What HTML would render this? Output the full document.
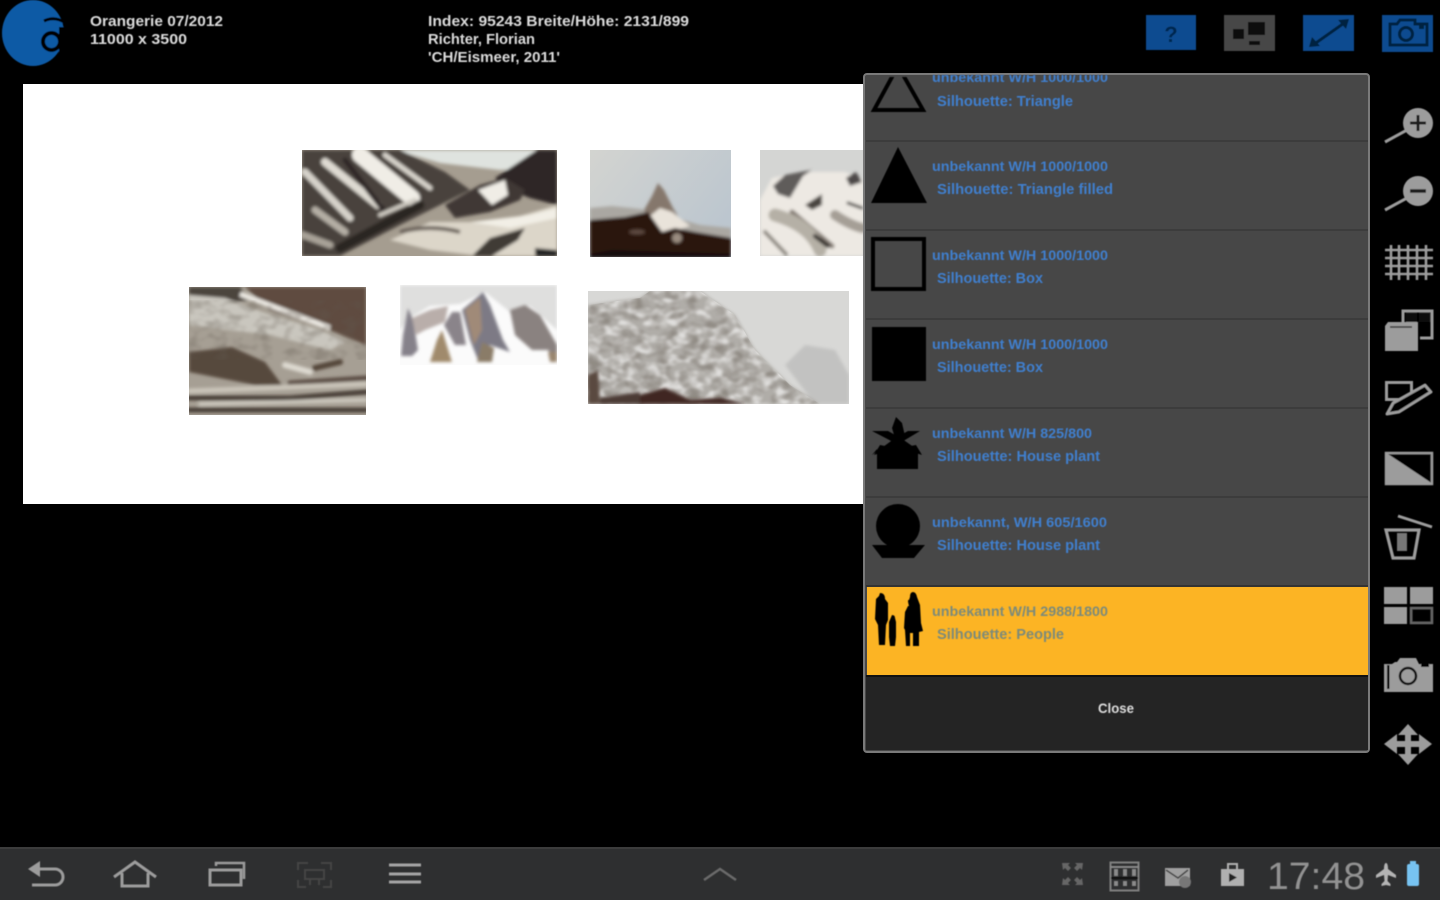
<!DOCTYPE html>
<html>
<head>
<meta charset="utf-8">
<style>
html,body{margin:0;padding:0;background:#000;width:1440px;height:900px;overflow:hidden}
svg{display:block;position:absolute;left:0;top:0}
text{font-family:"Liberation Sans",sans-serif}
</style>
</head>
<body>
<svg width="1440" height="900" viewBox="0 0 1440 900" xmlns="http://www.w3.org/2000/svg">
<defs>
<filter id="b1" x="-10%" y="-10%" width="120%" height="120%"><feGaussianBlur stdDeviation="1.6"/></filter>
<filter id="b2" x="-5%" y="-5%" width="110%" height="110%"><feGaussianBlur stdDeviation="0.6"/></filter>
<filter id="txd" x="0" y="0" width="100%" height="100%">
<feTurbulence type="fractalNoise" baseFrequency="0.07 0.1" numOctaves="2" seed="4"/>
<feColorMatrix values="0 0 0 0 .12  0 0 0 0 .1  0 0 0 0 .08  3.4 0 0 0 -1.5"/>
<feGaussianBlur stdDeviation="1"/>
</filter>
<filter id="txl" x="0" y="0" width="100%" height="100%">
<feTurbulence type="fractalNoise" baseFrequency="0.08 0.11" numOctaves="2" seed="11"/>
<feColorMatrix values="0 0 0 0 1  0 0 0 0 1  0 0 0 0 1  3.6 0 0 0 -1.55"/>
<feGaussianBlur stdDeviation="1"/>
</filter>
<clipPath id="p1"><rect x="302" y="150" width="255" height="106"/></clipPath>
<clipPath id="p2"><rect x="590" y="150" width="141" height="107"/></clipPath>
<clipPath id="p3"><rect x="760" y="150" width="104" height="106"/></clipPath>
<clipPath id="p4"><rect x="189" y="287" width="177" height="128"/></clipPath>
<clipPath id="p5"><rect x="400" y="285" width="157" height="80"/></clipPath>
<clipPath id="p6"><rect x="588" y="291" width="261" height="113"/></clipPath>
<clipPath id="m6"><polygon points="588,305 640,298 650,291 700,291 735,315 755,350 790,385 820,404 588,404"/></clipPath>
<clipPath id="c0"><rect x="864" y="77" width="100" height="60"/></clipPath>
<clipPath id="c1"><rect x="925" y="75" width="200" height="20"/></clipPath>
<linearGradient id="sky2" x1="0" y1="0" x2="1" y2="0.6"><stop offset="0" stop-color="#d3d4d0"/><stop offset="1" stop-color="#bcc6cf"/></linearGradient>
</defs>

<!-- white canvas -->
<rect x="23" y="84" width="842" height="420" fill="#fff"/>

<!-- photo 1 -->
<g clip-path="url(#p1)">
<rect x="302" y="150" width="255" height="106" fill="#a59d90"/>
<g filter="url(#b1)">
<polygon points="395,150 540,150 530,168 500,170 440,163" fill="#dfe3df"/>
<polygon points="302,150 400,150 445,172 470,190 440,205 400,225 340,256 302,256" fill="#4a423c"/>
<polygon points="495,178 537,150 557,150 557,205 530,198 510,190" fill="#2d2725"/>
<g fill="none" stroke-linecap="round">
<path d="M360 155 L412 198" stroke="#f0ede6" stroke-width="16"/>
<path d="M325 162 L378 205" stroke="#dedad2" stroke-width="8"/>
<path d="M305 172 L350 218" stroke="#d6d2ca" stroke-width="7"/>
<path d="M385 155 L430 188" stroke="#d8d4cc" stroke-width="5"/>
<path d="M315 210 L345 232" stroke="#b4aea4" stroke-width="7"/>
<path d="M303 235 L330 245" stroke="#a8a298" stroke-width="7"/>
<path d="M345 160 L385 212" stroke="#2e2825" stroke-width="5"/>
<path d="M340 248 L420 205" stroke="#2b2724" stroke-width="9"/>
<path d="M380 215 L415 200" stroke="#cfcbc2" stroke-width="4"/>
</g>
<polygon points="445,205 480,185 505,178 525,190 520,200 490,212 455,218" fill="#3f3835"/>
<polygon points="478,190 505,180 508,195 492,205" fill="#f0ede6"/>
<polygon points="390,240 430,222 500,222 557,205 557,256 480,256 430,250" fill="#dcd6c9"/>
<polygon points="470,222 530,215 557,208 557,218 510,228" fill="#f2efe6"/>
<polygon points="472,256 490,238 525,228 518,240 492,256" fill="#3f3a34"/>
<path d="M400 232 q30 -8 60 0" stroke="#6a625a" stroke-width="4" fill="none"/>
<polygon points="535,248 557,250 557,256 535,256" fill="#222"/>
</g>
</g>

<!-- photo 2 -->
<g clip-path="url(#p2)">
<rect x="590" y="150" width="141" height="107" fill="url(#sky2)"/>
<g filter="url(#b1)">
<polygon points="590,208 612,206 650,210 700,225 731,228 731,245 590,240" fill="#aaa7a2"/>
<polygon points="644,210 652,196 658,183 664,190 673,208 678,216 650,218" fill="#85776c"/>
<polygon points="650,216 660,208 672,212 690,226 664,234" fill="#e9e3da"/>
<polygon points="590,220 625,217 648,212 662,232 675,228 695,232 731,238 731,257 590,257" fill="#2a1310"/>
<ellipse cx="677" cy="238" rx="5" ry="5" fill="#9a8c80"/>
<ellipse cx="637" cy="232" rx="8" ry="2.500" fill="#5d4a40"/>
<polygon points="590,254 612,250 731,254 731,258 590,258" fill="#160a08"/>
</g>
</g>

<!-- photo 3 -->
<g clip-path="url(#p3)">
<rect x="760" y="150" width="104" height="106" fill="#d4d5d3"/>
<g filter="url(#b1)">
<polygon points="760,200 772,178 800,172 845,172 864,180 864,256 760,256" fill="#ede9e3"/>
<polygon points="773,186 785,175 800,172 812,170 803,176 790,198 778,194" fill="#5f5c5a"/>
<polygon points="846,178 856,172 862,182 850,186" fill="#4d4a48"/>
<polygon points="805,205 822,194 822,205 812,210" fill="#4a4540"/>
<g fill="none" stroke-linecap="round">
<path d="M792 212 L832 246" stroke="#857d74" stroke-width="5"/>
<path d="M765 232 L786 254" stroke="#8f8a82" stroke-width="4"/>
<path d="M775 215 Q810 225 820 250" stroke="#b5b0a6" stroke-width="13"/>
<path d="M835 215 Q850 225 862 228" stroke="#a59f96" stroke-width="10"/>
<path d="M815 236 L828 246" stroke="#2e2a27" stroke-width="4"/>
<path d="M848 203 L862 208" stroke="#3b3734" stroke-width="3"/>
</g>
</g>
</g>

<!-- photo 4 -->
<g clip-path="url(#p4)">
<rect x="189" y="287" width="177" height="128" fill="#a69f94"/>
<g filter="url(#b1)">
<polygon points="245,287 366,287 366,345 325,328 270,310" fill="#5e4c40"/>
<polygon points="189,287 240,287 250,300 225,303 189,295" fill="#4c443c"/>
<polygon points="189,295 225,298 270,315 320,330 345,342 330,350 270,335 189,325" fill="#c9c6be"/>
<path d="M240 294 L330 328" stroke="#ebe8e2" stroke-width="5" fill="none"/>
<polygon points="189,352 232,347 265,362 282,385 255,385 189,372" fill="#57483c"/>
<g fill="none" stroke-linecap="round">
<path d="M290 383 L366 378" stroke="#5c4e44" stroke-width="5"/>
<path d="M189 391 L270 388 L366 384" stroke="#cac5ba" stroke-width="5"/>
<path d="M189 398 L290 398 L366 392" stroke="#4a3f37" stroke-width="5"/>
<path d="M200 404 L366 400" stroke="#cfcbc1" stroke-width="3.500"/>
<path d="M189 410 L366 410" stroke="#4a4037" stroke-width="5"/>
<path d="M285 365 L310 372" stroke="#ddd9d0" stroke-width="6"/>
<path d="M315 368 L340 362" stroke="#54463b" stroke-width="6"/>
</g>
</g>
<rect x="189" y="300" width="177" height="60" filter="url(#txd)" opacity=".3"/>
</g>

<!-- photo 5 -->
<g clip-path="url(#p5)">
<rect x="400" y="285" width="157" height="80" fill="#fbfbfb"/>
<polygon points="400,285 557,285 557,330 530,306 510,312 485,292 460,304 430,306 410,318 400,330" fill="#dfdfde" filter="url(#b1)"/>
<g filter="url(#b1)">
<polygon points="401,356 403,335 408,308 413,320 418,350 412,356" fill="#85818a"/>
<polygon points="412,318 430,310 448,306 445,322 425,330 416,335" fill="#b9aeaa"/>
<polygon points="444,325 452,312 460,312 466,345 455,345" fill="#8a848a"/>
<polygon points="430,362 437,340 442,330 452,362" fill="#a08a6c"/>
<polygon points="462,310 474,300 483,292 490,305 503,340 510,352 490,345 478,360 470,340" fill="#7d7a85"/>
<polygon points="465,310 480,298 482,330 474,345" fill="#a08a78"/>
<polygon points="510,310 525,305 540,315 557,345 557,362 548,350 532,350 515,335" fill="#8a8280"/>
<polygon points="477,362 482,342 494,348 492,362" fill="#8a7c68"/>
<polygon points="548,352 557,352 557,362 550,362" fill="#9a8670"/>
</g>
</g>

<!-- photo 6 -->
<g clip-path="url(#p6)">
<rect x="588" y="291" width="261" height="113" fill="#d8d8d6"/>
<g filter="url(#b1)">
<polygon points="785,365 805,345 835,350 849,375 849,404 815,404" fill="#c2c2c1"/>
<polygon points="588,305 640,298 650,291 700,291 735,315 755,350 790,385 820,404 588,404" fill="#b0ada8"/>
</g>
<g clip-path="url(#m6)">
<rect x="588" y="291" width="240" height="113" filter="url(#txl)" opacity=".6"/>
<rect x="588" y="291" width="240" height="113" filter="url(#txd)" opacity=".4"/>
</g>
<g filter="url(#b1)">
<polygon points="640,395 665,388 690,400 720,398 745,404 630,404" fill="#3f2622"/>
<polygon points="588,375 598,370 600,404 588,404" fill="#5a4840"/>
<polygon points="600,398 640,392 640,404 600,404" fill="#4c3a34"/>
</g>
</g>

<!-- dialog -->
<rect x="864" y="74" width="505" height="678" rx="3" fill="#474747" stroke="#7a7a7a" stroke-width="2"/>
<g fill="#3c3c3c">
<rect x="866" y="140" width="502" height="2"/>
<rect x="866" y="229" width="502" height="2"/>
<rect x="866" y="318" width="502" height="2"/>
<rect x="866" y="407" width="502" height="2"/>
<rect x="866" y="496" width="502" height="2"/>
</g>
<rect x="866" y="585" width="502" height="2" fill="#333"/>
<rect x="867" y="587" width="501" height="88" fill="#fcb424"/>
<rect x="866" y="675" width="502" height="75" fill="#242424"/>
<rect x="866" y="675" width="502" height="2" fill="#111"/>

<!-- row icons -->
<g filter="url(#b2)">
<g clip-path="url(#c0)"><polygon points="898,66 923,110 874,110" fill="none" stroke="#000" stroke-width="4"/></g>
<polygon points="898,147 927,203 871,203" fill="#000"/>
<rect x="873" y="239" width="51" height="50" fill="none" stroke="#000" stroke-width="4"/>
<rect x="872" y="327" width="54" height="54" fill="#000"/>
<g fill="#000">
<polygon points="877,469 877,449 872,455 898,436 925,455 918,450 918,469"/>
<polygon points="897,445 892,428 896,417 902,423 905,436"/>
<polygon points="895,443 872,431 888,431 897,436"/>
<polygon points="900,443 920,431 908,431 899,436"/>
<polygon points="895,448 874,455 880,445"/>
<polygon points="900,448 922,455 916,445"/>
</g>
<circle cx="898" cy="526" r="22" fill="#000"/>
<polygon points="872,545 925,545 914,558 882,558" fill="#000"/>
<path d="M880 593 q5 0 5 6 l3 4 v17 l-2 5 -1 20 h-6 l-1-20 -3-6 1-20 3-3z" fill="#000"/>
<path d="M892 615 q3 0 3 3 l1 4 v15 l-1 9 h-5 l-1-9 v-15 z" fill="#000"/>
<path d="M909 600 q-2-1 0 6 l-1 0 -3 6 -1 16 1 2 1 16 h4 v-13 h3 v13 h6 v-14 l4-1 -2-8 -1-18 -3-8 q-1-5 -4-5 t-3 5 z" fill="#000"/>
</g>

<!-- row text -->
<g filter="url(#b2)" fill="#3f7fce" font-weight="bold">
<g clip-path="url(#c1)"><text x="932" y="82" font-size="13.5" textLength="176" lengthAdjust="spacingAndGlyphs">unbekannt W/H 1000/1000</text></g>
<text x="937" y="106" font-size="15" textLength="136" lengthAdjust="spacingAndGlyphs">Silhouette: Triangle</text>
<text x="932" y="171" font-size="13.5" textLength="176" lengthAdjust="spacingAndGlyphs">unbekannt W/H 1000/1000</text>
<text x="937" y="194" font-size="15" textLength="176" lengthAdjust="spacingAndGlyphs">Silhouette: Triangle filled</text>
<text x="932" y="260" font-size="13.5" textLength="176" lengthAdjust="spacingAndGlyphs">unbekannt W/H 1000/1000</text>
<text x="937" y="283" font-size="15" textLength="106" lengthAdjust="spacingAndGlyphs">Silhouette: Box</text>
<text x="932" y="349" font-size="13.5" textLength="176" lengthAdjust="spacingAndGlyphs">unbekannt W/H 1000/1000</text>
<text x="937" y="372" font-size="15" textLength="106" lengthAdjust="spacingAndGlyphs">Silhouette: Box</text>
<text x="932" y="438" font-size="13.5" textLength="160" lengthAdjust="spacingAndGlyphs">unbekannt W/H 825/800</text>
<text x="937" y="461" font-size="15" textLength="163" lengthAdjust="spacingAndGlyphs">Silhouette: House plant</text>
<text x="932" y="527" font-size="13.5" textLength="175" lengthAdjust="spacingAndGlyphs">unbekannt, W/H 605/1600</text>
<text x="937" y="550" font-size="15" textLength="163" lengthAdjust="spacingAndGlyphs">Silhouette: House plant</text>
<text x="932" y="616" font-size="13.5" textLength="176" lengthAdjust="spacingAndGlyphs" fill="#7b8a7a">unbekannt W/H 2988/1800</text>
<text x="937" y="639" font-size="15" textLength="127" lengthAdjust="spacingAndGlyphs" fill="#7b8a7a">Silhouette: People</text>
</g>
<text x="1116" y="713" font-size="14" font-weight="bold" fill="#ddd" text-anchor="middle" textLength="36" lengthAdjust="spacingAndGlyphs" filter="url(#b2)">Close</text>

<!-- header text -->
<g filter="url(#b2)" fill="#dcdcdc" font-weight="bold" font-size="15">
<text x="90" y="26" textLength="133" lengthAdjust="spacingAndGlyphs">Orangerie 07/2012</text>
<text x="90" y="44" textLength="97" lengthAdjust="spacingAndGlyphs">11000 x 3500</text>
<text x="428" y="26" textLength="261" lengthAdjust="spacingAndGlyphs">Index: 95243 Breite/Höhe: 2131/899</text>
<text x="428" y="44" textLength="107" lengthAdjust="spacingAndGlyphs">Richter, Florian</text>
<text x="428" y="62" textLength="132" lengthAdjust="spacingAndGlyphs">'CH/Eismeer, 2011'</text>
</g>

<!-- logo -->
<g filter="url(#b2)">
<ellipse cx="33" cy="33" rx="31" ry="33" fill="#105aa5"/>
<path d="M44 21 Q54 16 64 22" fill="none" stroke="#000" stroke-width="3"/>
<circle cx="51.500" cy="41.500" r="8.500" fill="#105aa5" stroke="#000" stroke-width="4"/>
<rect x="59" y="27" width="8" height="28" fill="#000"/>
</g>

<!-- top buttons -->
<g filter="url(#b2)">
<rect x="1146" y="15" width="50" height="35" fill="#0a4c90"/>
<text x="1171" y="42" font-size="22" font-weight="bold" fill="#06284e" text-anchor="middle">?</text>
<rect x="1224" y="15" width="51" height="36" fill="#474747"/>
<rect x="1233" y="29" width="11" height="10" fill="#111"/>
<rect x="1248" y="22" width="17" height="13" fill="#111"/>
<rect x="1249" y="41" width="11" height="4" fill="#111"/>
<rect x="1303" y="15" width="51" height="36" fill="#0a4c90"/>
<path d="M1313 45 L1347 21" stroke="#06213f" stroke-width="3"/>
<polygon points="1309,47 1320,46 1312,37" fill="#06213f"/>
<polygon points="1349,19 1338,20 1346,29" fill="#06213f"/>
<rect x="1382" y="15" width="51" height="37" fill="#0a4c90"/>
<path d="M1390 24 h7 l3-4 h15 v4 h12 v21 h-37 z" fill="none" stroke="#06213f" stroke-width="3"/>
<circle cx="1406" cy="34" r="6.500" fill="none" stroke="#06213f" stroke-width="3"/>
<rect x="1419" y="25" width="5" height="4" fill="#06213f"/>
</g>

<!-- side toolbar -->
<g filter="url(#b2)" fill="#9c9c9c" stroke="none">
<circle cx="1418" cy="123" r="15"/>
<path d="M1385 142 L1407 130" stroke="#9c9c9c" stroke-width="3"/>
<path d="M1410 123 h16 M1418 115 v16" stroke="#1a1a1a" stroke-width="3"/>
<circle cx="1418" cy="191" r="15"/>
<path d="M1385 210 L1407 198" stroke="#9c9c9c" stroke-width="3"/>
<path d="M1410 191 h16" stroke="#1a1a1a" stroke-width="3.500"/>
<path d="M1391 245 v35 M1399 245 v35 M1408 245 v35 M1417 245 v35 M1426 245 v35 M1385 250 h48 M1385 258 h48 M1385 266 h48 M1385 274 h48" stroke="#9c9c9c" stroke-width="2.600" fill="none"/>
<path d="M1403 326 v-15 h29 v27 h-12" fill="none" stroke="#9c9c9c" stroke-width="3"/>
<rect x="1406" y="313" width="11" height="9" fill="#111"/>
<rect x="1419" y="313" width="11" height="9" fill="#111"/>
<path d="M1385 326 l3-4 h30 v29 h-33 z"/>
<path d="M1390 327 h22" stroke="#333" stroke-width="1.500"/>
<rect x="1386.500" y="382.500" width="25" height="17" fill="none" stroke="#9c9c9c" stroke-width="3"/>
<path d="M1387 414 L1393 403 L1425 385 L1431 392 L1399 412 Z" fill="#000" stroke="#9c9c9c" stroke-width="3" stroke-linejoin="round"/>
<rect x="1386" y="453" width="46" height="31" fill="#000" stroke="#9c9c9c" stroke-width="2.500"/>
<polygon points="1385,452 1433,484 1385,484"/>
<path d="M1398 516 L1432 527" stroke="#9c9c9c" stroke-width="3"/>
<path d="M1386 530 H1419 L1414 558 H1393 Z" fill="none" stroke="#9c9c9c" stroke-width="3.200"/>
<rect x="1397" y="533" width="10" height="18" fill="#777"/>
<rect x="1384" y="587" width="23" height="17"/>
<rect x="1384" y="607" width="23" height="17"/>
<rect x="1410" y="587" width="23" height="17"/>
<rect x="1411" y="608" width="21" height="15" fill="#000" stroke="#666" stroke-width="2.500"/>
<path d="M1384 664 h8 l3-2 h2 l3-4 h16 l3 6 h14 v28 h-49 z"/>
<rect x="1387" y="665" width="2.500" height="24" fill="#000"/>
<circle cx="1408" cy="676" r="8" fill="none" stroke="#111" stroke-width="2.500"/>
<rect x="1421" y="663" width="8" height="4" fill="#000"/>
<polygon points="1408,724 1418,735 1411,735 1411,741 1419,741 1419,734 1432,744 1419,754 1419,747 1411,747 1411,754 1418,754 1408,765 1398,754 1405,754 1405,747 1397,747 1397,754 1384,744 1397,734 1397,741 1405,741 1405,735 1398,735"/>
</g>

<!-- status bar -->
<rect x="0" y="848" width="1440" height="52" fill="#2e2f30"/>
<rect x="0" y="847" width="1440" height="2" fill="#3c3c3c"/>
<g filter="url(#b2)" fill="none" stroke="#9c9c9c" stroke-width="3">
<polygon points="28,869 40,861 40,877" fill="#9c9c9c" stroke="none"/>
<path d="M39 869 H55 A8 8 0 0 1 55 885 H32"/>
<path d="M114 877 L135 862 L156 877"/>
<path d="M122 873 V886 H148 V873"/>
<rect x="210" y="870" width="31" height="15"/>
<path d="M216 866 V863 H244 V879" stroke-width="2.500"/>
<g stroke="#454545" stroke-width="2">
<path d="M298 870 V863 H308 M321 863 H331 V870 M298 880 V887 H306 M323 887 H331 V880"/>
<rect x="305" y="870" width="19" height="9"/>
<path d="M310 879 v6 M319 879 v6"/>
</g>
<path d="M389 865 H421 M389 874 H421 M389 882 H421" stroke="#a4a4a4"/>
<path d="M704 880 L720 869 L736 880" stroke="#6a6a6a" stroke-width="2.500"/>
<g stroke="none" fill="#666">
<path d="M1062 863 h8 l-2 2 3 3 -3 3 -3-3 -2 2 z M1083 863 h-8 l2 2 -3 3 3 3 3-3 2 2 z M1062 885 h8 l-2-2 3-3 -3-3 -3 3 -2-2 z M1083 885 h-8 l2-2 -3-3 3-3 3 3 2-2 z"/>
</g>
<rect x="1110.500" y="862.500" width="28" height="28" stroke="#808080" stroke-width="2"/>
<g stroke="none" fill="#8a8a8a">
<rect x="1110" y="866" width="29" height="2"/>
<rect x="1114" y="869" width="4" height="7"/><rect x="1123" y="869" width="4" height="7"/><rect x="1132" y="869" width="4" height="7"/>
<rect x="1114" y="881" width="4" height="5"/><rect x="1123" y="881" width="4" height="5"/><rect x="1132" y="881" width="4" height="5"/>
</g>
<rect x="1111" y="877" width="27" height="2" fill="#111" stroke="none"/>
<rect x="1165" y="868" width="25" height="18" fill="#a0a0a0" stroke="none"/>
<path d="M1166 870 L1178 878 L1188 870" stroke="#444" stroke-width="1.600"/>
<circle cx="1185" cy="882" r="6" fill="#777" stroke="none"/>
<path d="M1221 869 H1244 V886 H1221 Z" fill="#b0b0b0" stroke="none"/>
<path d="M1228 869 V864 H1237 V869" stroke="#b0b0b0" stroke-width="2"/>
<polygon points="1229,873 1229,882 1237,877.500" fill="#222" stroke="none"/>
<path d="M1386 863 c1.500 0 2 3 2 6 l8 6 v3 l-8-3 -.5 6 3 3 v2 l-4.500-1 -4.500 1 v-2 l3-3 -.5-6 -8 3 v-3 l8-6 c0-3 .5-6 2-6z" fill="#b4b4b4" stroke="none"/>
<rect x="1407" y="864" width="12" height="22" rx="2" fill="#77c3f1" stroke="none"/>
<rect x="1410" y="861" width="6" height="4" fill="#77c3f1" stroke="none"/>
</g>
<text x="1267" y="889" font-size="38" fill="#929292" textLength="98" lengthAdjust="spacingAndGlyphs" filter="url(#b2)">17:48</text>
</svg>
</body>
</html>
